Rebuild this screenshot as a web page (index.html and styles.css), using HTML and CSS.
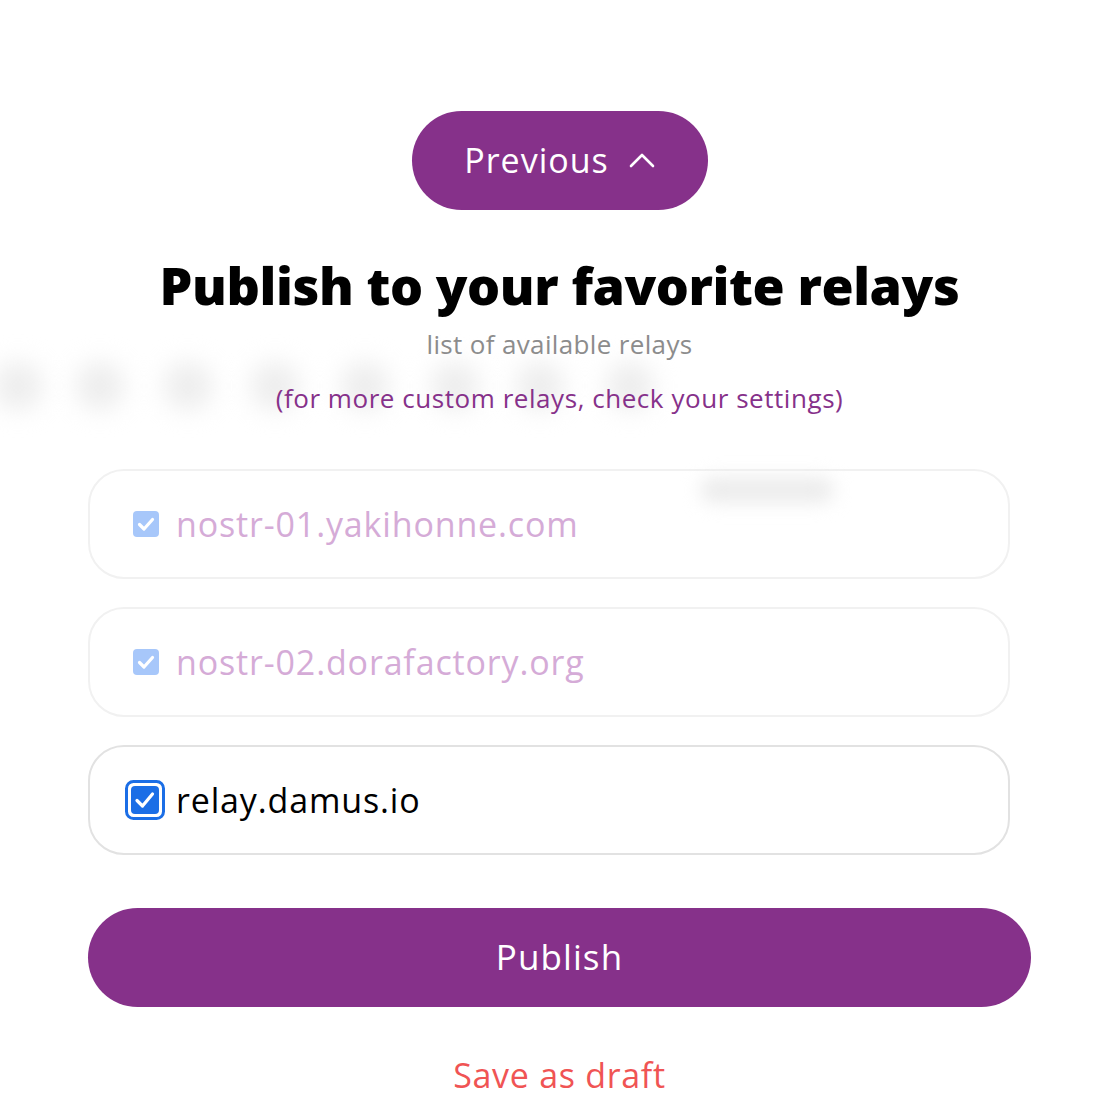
FILE: index.html
```html
<!DOCTYPE html>
<html lang="en">
<head>
<meta charset="utf-8">
<title>Publish</title>
<link rel="stylesheet" href="styles.css">
</head>
<body>
<div class="backdrop" aria-hidden="true">
  <span class="blob b1"></span>
  <span class="blob b2"></span>
  <span class="blob b3"></span>
  <span class="blob b4"></span>
  <span class="blob b5"></span>
  <span class="blob b6"></span>
  <span class="blob b7"></span>
  <span class="blob b8"></span>
</div>
<span class="bar-blob" aria-hidden="true"></span>
<main class="panel">
  <div class="top">
    <button class="prev-btn" type="button">
      <span>Previous</span>
      <svg class="chev" width="26" height="16" viewBox="0 0 26 16"><path d="M2 14 L13 3 L24 14" fill="none" stroke="#fff" stroke-width="2.6" stroke-linecap="round" stroke-linejoin="round"/></svg>
    </button>
  </div>
  <h1 class="title">Publish to your favorite relays</h1>
  <p class="subtitle">list of available relays</p>
  <p class="hint">(for more custom relays, check your settings)</p>

  <div class="relays">
    <label class="relay disabled">
      <span class="cb cb-disabled">
        <svg width="26" height="26" viewBox="0 0 26 26"><rect width="26" height="26" rx="4" fill="#a7c7fa"/><path d="M6.5 13.5 L11 18 L19.5 8.5" fill="none" stroke="#fff" stroke-width="3.2" stroke-linecap="round" stroke-linejoin="round"/></svg>
      </span>
      <span class="relay-name">nostr-01.yakihonne.com</span>
    </label>
    <label class="relay disabled">
      <span class="cb cb-disabled">
        <svg width="26" height="26" viewBox="0 0 26 26"><rect width="26" height="26" rx="4" fill="#a7c7fa"/><path d="M6.5 13.5 L11 18 L19.5 8.5" fill="none" stroke="#fff" stroke-width="3.2" stroke-linecap="round" stroke-linejoin="round"/></svg>
      </span>
      <span class="relay-name">nostr-02.dorafactory.org</span>
    </label>
    <label class="relay active">
      <span class="cb cb-active">
        <svg width="40" height="40" viewBox="0 0 40 40"><rect x="1.5" y="1.5" width="37" height="37" rx="7" fill="none" stroke="#1b6ee6" stroke-width="3"/><rect x="6" y="6" width="28" height="28" rx="4" fill="#1b6ee6"/><path d="M12 20.5 L17.5 26 L27.5 14" fill="none" stroke="#fff" stroke-width="3.2" stroke-linecap="round" stroke-linejoin="round"/></svg>
      </span>
      <span class="relay-name">relay.damus.io</span>
    </label>
  </div>

  <button class="publish-btn" type="button">Publish</button>
  <div class="draft-row"><button class="draft-btn" type="button">Save as draft</button></div>
</main>
</body>
</html>
```

FILE: styles.css
```css
* { box-sizing: border-box; }
html, body { margin: 0; padding: 0; background: #fff; }
body {
  font-family: "Open Sans", "Noto Sans", "DejaVu Sans", sans-serif;
  color: #000;
  position: relative;
  min-height: 1120px;
  overflow: hidden;
}
.backdrop { position: absolute; inset: 0; pointer-events: none; z-index: 0; }
.blob {
  position: absolute;
  top: 362px;
  width: 48px;
  height: 48px;
  border-radius: 50%;
  background: #ededed;
  filter: blur(12px);
}
.b1 { left: -6px; }
.b2 { left: 76px; }
.b3 { left: 164px; }
.b4 { left: 251px; }
.b5 { left: 341px; }
.b6 { left: 431px; }
.b7 { left: 516px; }
.b8 { left: 606px; }
.bar-blob {
  position: absolute;
  z-index: 2;
  left: 700px;
  top: 477px;
  width: 134px;
  height: 26px;
  border-radius: 13px;
  background: #ececec;
  filter: blur(9px);
  pointer-events: none;
}
.panel {
  position: relative;
  z-index: 1;
  width: 943px;
  margin-left: 88px;
  padding-top: 111px;
  display: flex;
  flex-direction: column;
}
.top { display: flex; justify-content: center; }
.prev-btn {
  width: 296px;
  height: 99px;
  border: none;
  border-radius: 50px;
  background: #86318a;
  color: #fff;
  font-family: inherit;
  font-size: 34px;
  font-weight: 500;
  letter-spacing: 1px;
  display: flex;
  align-items: center;
  justify-content: center;
  gap: 20px;
  padding: 0 0 2px 0;
}
.chev { margin-top: 0; }
.title {
  margin: 43px 0 0;
  text-align: center;
  font-size: 52px;
  font-weight: 800;
  line-height: 64px;
  letter-spacing: -0.4px;
}
.subtitle {
  margin: 10px 0 0;
  text-align: center;
  color: #8c8c8c;
  font-size: 26px;
  letter-spacing: 0.35px;
  line-height: 34px;
}
.hint {
  margin: 20px 0 0;
  text-align: center;
  color: #86318a;
  font-size: 26px;
  letter-spacing: 0.55px;
  line-height: 34px;
}
.relays {
  margin-top: 54px;
  width: 922px;
  display: flex;
  flex-direction: column;
  gap: 28px;
}
.relay {
  height: 110px;
  border: 2px solid #f1f1f1;
  border-radius: 36px;
  display: flex;
  align-items: center;
  padding-left: 43px;
  gap: 17px;
  background: #fff;
}
.relay.active { border-color: #e2e2e2; padding-left: 35px; gap: 11px; }
.cb { display: flex; }
.relay-name { font-size: 34px; line-height: 40px; letter-spacing: 0.85px; }
.disabled .relay-name { color: #d5abd7; }
.active .relay-name { color: #000; }
.publish-btn {
  margin-top: 53px;
  height: 99px;
  width: 943px;
  border: none;
  border-radius: 50px;
  background: #86318a;
  color: #fff;
  font-family: inherit;
  font-size: 35px;
  font-weight: 500;
  letter-spacing: 1.1px;
  padding: 0 0 2px 0;
}
.draft-row { display: flex; justify-content: center; margin-top: 48px; }
.draft-btn {
  border: none;
  background: none;
  color: #f05454;
  font-family: inherit;
  font-size: 34px;
  letter-spacing: 0.7px;
  line-height: 40px;
  padding: 0;
}
```
